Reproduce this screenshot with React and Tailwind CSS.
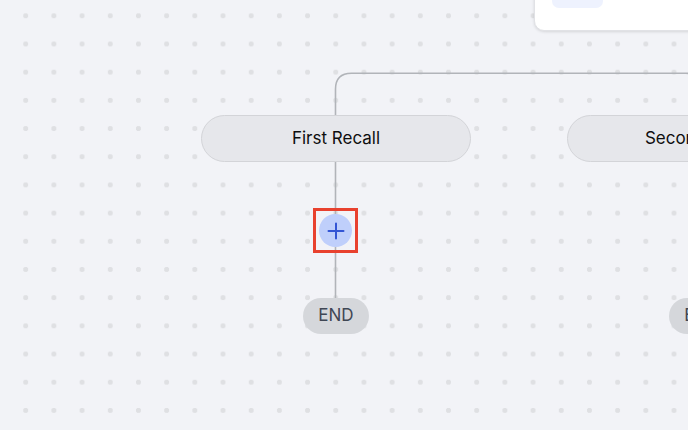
import React from "react";

export default function App() {
  return (
    <div
      className="relative w-[688px] h-[430px] overflow-hidden bg-[#f2f3f7] bg-[radial-gradient(circle,#dfe0e3_2.3px,transparent_2.9px)] bg-[size:28.2px_28.2px] bg-[position:11.6px_1.7px]"
      style={{ fontFamily: "Inter, 'Noto Sans', sans-serif" }}
    >
      {/* edges */}
      <svg className="absolute left-0 top-0" width="688" height="430" fill="none">
        <path
          d="M335.5 115 V89.3 Q335.5 73.3 351.5 73.3 H686 Q702 73.3 702 89.3 V115"
          stroke="#b1b4b9"
          strokeWidth="1.6"
        />
        <path d="M335.5 162 V298" stroke="#b1b4b9" strokeWidth="1.6" />
      </svg>

      {/* top right card */}
      <div className="absolute left-[534px] top-[-40px] w-[200px] h-[71px] rounded-[10px] bg-white border border-[#e1e2e6] shadow-[0_1px_3px_rgba(0,0,0,0.12)]">
        <div className="absolute left-[17px] top-[20px] w-[51px] h-[27px] rounded-[7px] bg-[#eef2fe]" />
      </div>

      {/* First Recall node */}
      <div className="absolute left-[201px] top-[115px] w-[270px] h-[47px] rounded-full bg-[#e6e7eb] border border-[#d3d4d8] flex items-center justify-center pt-[1px] text-[17px] text-[#0f0f0f] font-normal">
        First Recall
      </div>

      {/* Second Recall node */}
      <div className="absolute left-[567px] top-[115px] w-[270px] h-[47px] rounded-full bg-[#e6e7eb] border border-[#d3d4d8] flex items-center justify-center pt-[1px] text-[17px] text-[#0f0f0f] font-normal">
        Second Recall
      </div>

      {/* plus button with highlight */}
      <div className="absolute left-[313px] top-[208px] w-[45px] h-[45px] border-[3px] border-[#e8412e] flex items-center justify-center">
        <div className="w-[33px] h-[33px] rounded-full bg-[#bfcffb] flex items-center justify-center">
          <svg width="18" height="18" viewBox="0 0 18 18">
            <path d="M9 1.5 V16.5 M1.5 9 H16.5" stroke="#3355d4" strokeWidth="2" strokeLinecap="round" />
          </svg>
        </div>
      </div>

      {/* END pills */}
      <div className="absolute left-[303px] top-[298px] w-[66px] h-[36px] rounded-full bg-[#d5d7db] flex items-center justify-center text-[17px] text-[#3f4654]">
        END
      </div>
      <div className="absolute left-[669px] top-[298px] w-[66px] h-[36px] rounded-full bg-[#d5d7db] flex items-center justify-center text-[17px] text-[#3f4654]">
        END
      </div>
    </div>
  );
}
